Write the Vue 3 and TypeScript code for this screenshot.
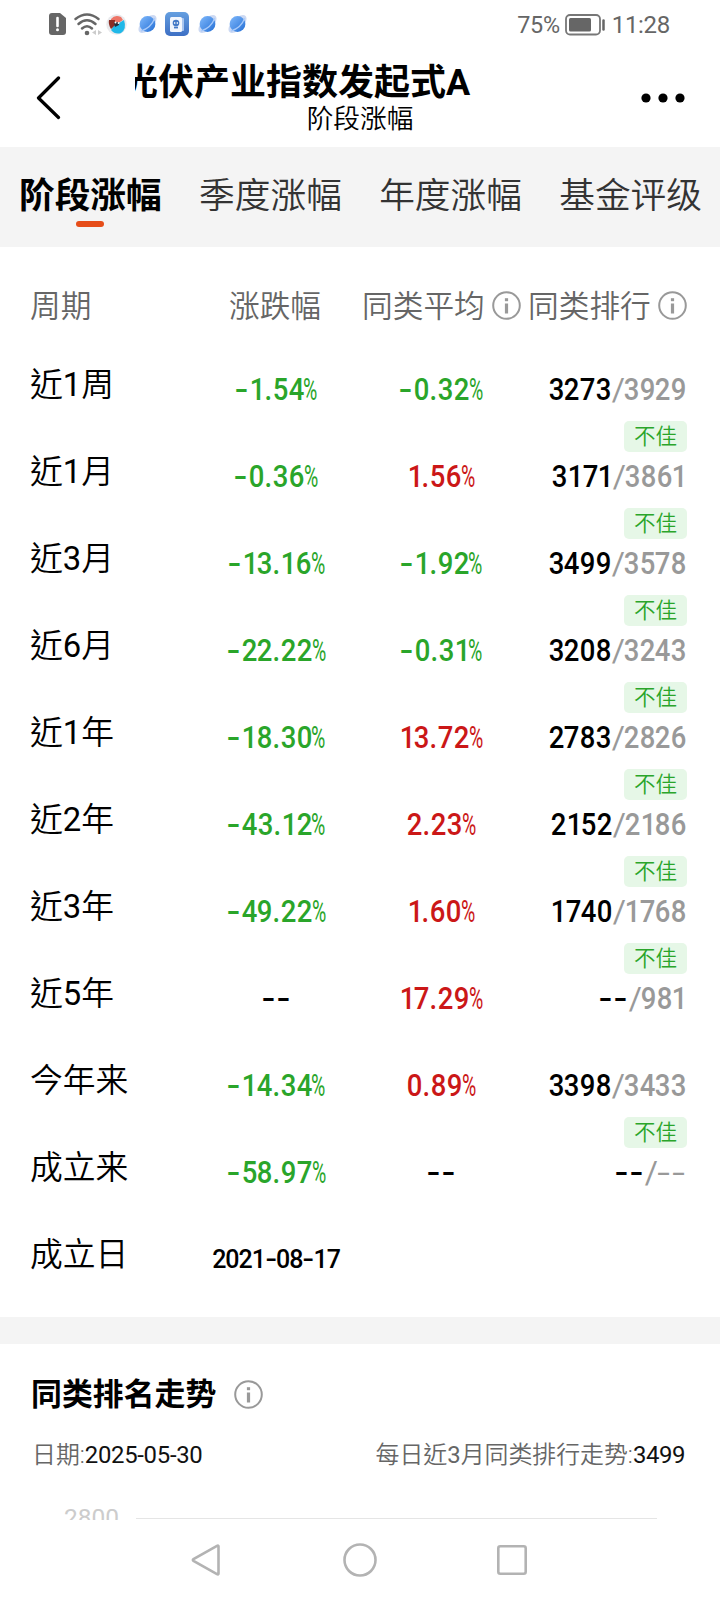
<script setup lang="ts">
interface Row {
  label: string
  change: string
  average: string
  rank: string
  total: string
  poor: boolean
}

const tabs: string[] = ['阶段涨幅', '季度涨幅', '年度涨幅', '基金评级']

const rows: Row[] = [
  { label: '近1周', change: '-1.54', average: '-0.32', rank: '3273', total: '3929', poor: true },
  { label: '近1月', change: '-0.36', average: '1.56', rank: '3171', total: '3861', poor: true },
  { label: '近3月', change: '-13.16', average: '-1.92', rank: '3499', total: '3578', poor: true },
  { label: '近6月', change: '-22.22', average: '-0.31', rank: '3208', total: '3243', poor: true },
  { label: '近1年', change: '-18.30', average: '13.72', rank: '2783', total: '2826', poor: true },
  { label: '近2年', change: '-43.12', average: '2.23', rank: '2152', total: '2186', poor: true },
  { label: '近3年', change: '-49.22', average: '1.60', rank: '1740', total: '1768', poor: true },
  { label: '近5年', change: '--', average: '17.29', rank: '--', total: '981', poor: false },
  { label: '今年来', change: '-14.34', average: '0.89', rank: '3398', total: '3433', poor: true },
  { label: '成立来', change: '-58.97', average: '--', rank: '--', total: '--', poor: false },
]

const tone = (v: string): string => (v === '--' ? 'none' : v.startsWith('-') ? 'down' : 'up')
const splitChars = (v: string): string[] => v.split('')
const charClass = (c: string): string =>
  c === '-' ? 'dash' : c === '.' ? 'dot' : c === '1' ? 'one' : 'digit'
const isDigit = (c: string): boolean => c >= '0' && c <= '9'
</script>

<template>
  <div class="screen">
    <div class="status">
      <div class="status-left">
        <svg class="sim" width="17" height="22" viewBox="0 0 17 22"><path d="M3 0h8l6 5v14q0 3-3 3H3q-3 0-3-3V3q0-3 3-3z" fill="#666" /><path d="M8.500 5v8" stroke="#fff" stroke-width="2.600" stroke-linecap="round" /><circle cx="8.500" cy="16.800" r="1.500" fill="#fff" /></svg>
        <svg class="wifi" width="28" height="23" viewBox="0 0 28 23"><g fill="none" stroke="#666" stroke-width="2.500" stroke-linecap="round"><path d="M1.500 6Q13 -3 24.500 6" /><path d="M4.500 11Q13 3.500 21.500 11" /><path d="M8 15.500Q13 11 18 15.500" /></g><circle cx="13" cy="20" r="2.300" fill="#666" /><path d="M22 17v5l-4-2.500zM24 17v5l4-2.500z" fill="#ccc" /></svg>
        <svg class="bird" width="21" height="21" viewBox="0 0 21 21"><circle cx="10.500" cy="10.500" r="10.200" fill="#e9eaed" /><path d="M5 5Q9 0 15 3l2 3-6 4-6-1z" fill="#ed7567" /><path d="M3 6l6 0 1 5-5 4Q2 10 3 6z" fill="#8c2d25" /><path d="M8 12l10-6q3 9-3 13-6 2-10-3z" fill="#20b8e8" /><path d="M8 8l5 0 0 3-4 2z" fill="#252f3c" /><circle cx="9.500" cy="8.500" r="1" fill="#fff" /><circle cx="12.500" cy="9" r=".9" fill="#fff" /></svg>
        <svg class="planet" width="20" height="20" viewBox="0 0 20 20"><defs><linearGradient id="globe" x2="1" y2="1"><stop stop-color="#80b9fc" /><stop offset="1" stop-color="#246fd5" /></linearGradient></defs><ellipse cx="10" cy="10" rx="12" ry="6" transform="rotate(-45 10 10)" fill="#ccd9f3" /><circle cx="10" cy="10" r="8.300" fill="url(#globe)" /><path d="M3 17.500Q14 14 17.500 4" fill="none" stroke="#a9cbfa" stroke-width="1.300" /></svg>
        <svg class="app" width="24" height="24" viewBox="0 0 24 24"><defs><linearGradient id="tile" x2="0" y2="1"><stop stop-color="#659fe0" /><stop offset="1" stop-color="#3d6fc4" /></linearGradient></defs><rect width="24" height="24" rx="5" fill="url(#tile)" /><rect x="10" y="6" width="9" height="13" rx="1" fill="#a9c6f0" /><rect x="5" y="5" width="12" height="15" rx="1.500" fill="#f2f6fd" /><circle cx="11" cy="11" r="3.300" fill="#4479c6" /><path d="M9 11h1.300m1.400 0H13" stroke="#fff" stroke-width="1.300" /><path d="M9 15.500h4" stroke="#4479c6" stroke-width="1.800" /></svg>
        <svg v-for="n in 2" :key="n" class="planet" width="20" height="20" viewBox="0 0 20 20"><ellipse cx="10" cy="10" rx="12" ry="6" transform="rotate(-45 10 10)" fill="#ccd9f3" /><circle cx="10" cy="10" r="8.300" fill="url(#globe)" /><path d="M3 17.500Q14 14 17.500 4" fill="none" stroke="#a9cbfa" stroke-width="1.300" /></svg>
      </div>
      <div class="status-right">
        <span class="percent">75%</span>
        <svg width="41" height="22" viewBox="0 0 41 22"><rect x="1" y="1" width="34" height="19.500" rx="4" fill="none" stroke="#777" stroke-width="1.800" /><rect x="4" y="4" width="22" height="13.500" rx="1.500" fill="#666" /><path d="M38.500 6.500v9" stroke="#666" stroke-width="2.500" stroke-linecap="round" /></svg>
        <span class="clock">11:28</span>
      </div>
    </div>

    <header class="header">
      <svg class="back" width="25" height="44" viewBox="0 0 25 44"><path d="M22.500 2L2.500 22l20 19.500" fill="none" stroke="#000" stroke-width="3.200" stroke-linecap="round" stroke-linejoin="round" /></svg>
      <div class="titles">
        <div class="marquee"><span>光伏产业指数发起式A</span></div>
        <div class="subtitle">阶段涨幅</div>
      </div>
      <svg class="more" width="44" height="10" viewBox="0 0 44 10"><circle cx="5" cy="5" r="4.600" /><circle cx="22" cy="5" r="4.600" /><circle cx="39" cy="5" r="4.600" /></svg>
    </header>

    <nav class="tabs">
      <div v-for="(tab, i) in tabs" :key="tab" class="tab" :class="{ active: i === 0 }">
        <span>{{ tab }}</span><i v-if="i === 0" />
      </div>
    </nav>

    <section class="table">
      <div class="grid head">
        <span>周期</span>
        <span class="mid">涨跌幅</span>
        <span class="info-head">同类平均<svg width="29" height="29" viewBox="0 0 29 29"><circle cx="14.500" cy="14.500" r="13.300" /><path d="M14.500 12.500v10" /><path d="M14.500 7.200v3" /></svg></span>
        <span class="info-head last">同类排行<svg width="29" height="29" viewBox="0 0 29 29"><circle cx="14.500" cy="14.500" r="13.300" /><path d="M14.500 12.500v10" /><path d="M14.500 7.200v3" /></svg></span>
      </div>
      <div v-for="row in rows" :key="row.label" class="grid row">
        <span class="label"><span v-for="(c, j) in splitChars(row.label)" :key="j" :class="{ count: isDigit(c) }">{{ c }}</span></span>
        <span v-for="(value, k) in [row.change, row.average]" :key="k" class="num mid" :class="tone(value)">
          <b v-for="(c, j) in splitChars(value)" :key="j" :class="charClass(c)">{{ c }}</b><em v-if="value !== '--'">%</em>
        </span>
        <div class="ranking">
          <div class="num">
            <b v-for="(c, j) in splitChars(row.rank)" :key="j" :class="charClass(c)">{{ c }}</b><span class="total"><b class="slash">/</b><b v-for="(c, j) in splitChars(row.total)" :key="j" :class="charClass(c)">{{ c }}</b></span>
          </div>
          <div v-if="row.poor" class="badge">不佳</div>
        </div>
      </div>
      <div class="grid row final">
        <span class="label">成立日</span>
        <span class="mid date">2021<u>-</u>08<u>-</u>17</span>
      </div>
    </section>

    <div class="divider" />

    <section class="trend">
      <h2>同类排名走势<svg width="29" height="29" viewBox="0 0 29 29"><circle cx="14.500" cy="14.500" r="13.300" /><path d="M14.500 12.500v10" /><path d="M14.500 7.200v3" /></svg></h2>
      <div class="legend">
        <span>日期:<strong class="day">2025-05-30</strong></span>
        <span>每日近<span class="count">3</span>月同类排行走势:<strong>3499</strong></span>
      </div>
      <div class="chart"><span>2800</span><i /></div>
    </section>

    <footer class="navbar">
      <svg width="30" height="34" viewBox="0 0 30 34"><path d="M27.500 3.500v27q0 1.500-1.500.7L2.500 18q-1.300-1 0-2L26 2.800q1.500-.8 1.500.7z" /></svg>
      <svg class="home" width="34" height="34" viewBox="0 0 34 34"><circle cx="17" cy="17" r="15.500" /></svg>
      <svg width="30" height="30" viewBox="0 0 30 30"><rect x="1.300" y="1.300" width="27.400" height="27.400" rx="2" /></svg>
    </footer>
  </div>
</template>

<style>
body { margin: 0; background: #fff; }
</style>

<style scoped>
.screen { width: 720px; height: 1600px; overflow: hidden; display: flex; flex-direction: column; background: #fff; color: #000; font-family: Roboto, "Noto Sans CJK SC", sans-serif; box-sizing: border-box; }
.status { height: 50px; flex: none; display: flex; justify-content: space-between; padding: 0 50px 0 49px; color: #666; }
.status-left, .status-right { display: flex; align-items: center; height: 48px; }
.status-left svg { overflow: visible; }
.wifi { margin-left: 8px; }
.bird { margin-left: 4px; }
.planet { margin-left: 11px; }
.app { margin-left: 8px; }
.status-left .app + .planet { margin-left: 9px; }
.status-left .planet { width: 19px; }
.status-left .planet:last-child { margin-left: 11px; }
.status-right { font-size: 23.400px; }
.status-right svg { margin: 1px 6px 0 5px; }
.percent, .clock { line-height: 50px; padding-top: 2px; }
.percent { letter-spacing: -.3px; }
.clock { font-size: 24px; letter-spacing: -.3px; }
.header { height: 97px; flex: none; display: flex; align-items: flex-start; }
.back { margin: 26px 0 0 36px; }
.titles { margin-left: 74px; width: 450px; }
.marquee { height: 54px; line-height: 66px; overflow: hidden; white-space: nowrap; font-size: 36px; font-weight: 700; }
.marquee span { margin-left: -13px; }
.subtitle { font-size: 26.700px; line-height: 30px; text-align: center; font-weight: 350; }
.more { margin: 43px 0 0 56px; }
.tabs { flex: none; height: 100px; background: #f4f4f4; display: flex; justify-content: space-between; padding: 0 18px 0 19px; box-sizing: border-box; font-size: 35.700px; color: #333; font-weight: 350; }
.tab { display: flex; flex-direction: column; align-items: center; white-space: nowrap; }
.tab span { line-height: 74px; padding-top: 12px; height: 62px; }
.tab i { width: 28px; height: 6px; border-radius: 3px; background: #e64d19; }
.active { color: #000; font-weight: 700; }
.table { height: 1070px; flex: none; }
.grid { display: grid; grid-template-columns: 162px 166px 164px 164px; padding: 0 34px 0 30px; }
.head { height: 118px; line-height: 114px; color: #666; font-size: 30.700px; font-weight: 350; font-family: "Noto Sans CJK SC", sans-serif; box-sizing: border-box; white-space: nowrap; }
.mid { text-align: center; }
.info-head { display: flex; align-items: center; height: 114px; gap: 7px; padding-left: 4px; }
.info-head.last { padding-left: 6px; }
.info-head svg, h2 svg { flex: none; fill: none; stroke: #999; stroke-width: 2; }
.info-head svg { margin-top: 2px; }
.info-head svg path, h2 svg path { stroke-width: 3.200; }
.row { height: 87px; }
.label { font-size: 32.800px; line-height: 41px; font-family: Roboto, "Noto Sans CJK TC", sans-serif; font-weight: 350; white-space: nowrap; }
.count { font-weight: 400; }
.num { display: flex; align-items: center; justify-content: center; height: 50px; font-size: 30.500px; font-weight: 550; line-height: 50px; }
.mid.num { padding-left: 2px; }
.num b { font-weight: inherit; display: block; width: 15.800px; text-align: center; transform: scaleX(.9); }
.num b.one { width: 14.600px; }
.num b.dot { width: 8.200px; }
.num b.dash { width: 15px; transform: scaleX(1.300); }
.num b.slash { width: 12px; transform: translateX(1px) scaleX(1.050); font-weight: 400; }
.num em { font-style: normal; font-weight: 400; display: block; width: 14.500px; transform: scaleX(.64); transform-origin: 0 50%; }
.down { color: #2aa52a; }
.up { color: #cb1717; }
.ranking { display: flex; flex-direction: column; align-items: flex-end; margin-right: -1px; }
.ranking .num { margin-right: 1px; }
.total { display: flex; color: #999; font-weight: 500; }
.total b.dash { transform: scaleX(1.500); font-weight: 400; }
.badge { margin-top: 6px; width: 63px; height: 31px; line-height: 32px; border-radius: 5px; background: #e6f7e7; color: #2aa52a; font-size: 21.500px; font-weight: 350; text-align: center; }
.final { height: 82px; }
.date { font-size: 25px; line-height: 49px; font-weight: 500; letter-spacing: -1px; padding-left: 2px; }
.date u { display: inline-block; width: 11px; text-decoration: none; transform: scaleX(1.350); }
.divider { height: 27px; flex: none; background: #f4f4f4; }
.trend { height: 176px; flex: none; overflow: hidden; }
h2 { margin: 0; padding: 29px 0 0 31px; font-size: 30.900px; line-height: 48px; height: 44px; font-weight: 700; display: flex; align-items: center; gap: 18px; }
h2 svg { margin-top: -2px; }
.legend { display: flex; justify-content: space-between; padding: 19px 35px 0 32px; font-size: 23.900px; line-height: 38px; color: #666; font-weight: 350; font-family: Roboto, "Noto Sans CJK TC", sans-serif; }
.legend strong { color: #111; font-weight: 400; letter-spacing: -.4px; }
.legend .day { letter-spacing: -.3px; }
.chart { display: flex; align-items: center; padding: 31px 63px 0 64px; gap: 17px; font-size: 24.500px; line-height: 26px; color: #ccc; }
.chart i { height: 1px; flex: 1; background: #e5e5e5; }
.navbar { flex: none; height: 80px; display: flex; align-items: center; padding: 0 193px 0 191px; justify-content: space-between; }
.navbar svg { fill: none; stroke: #b3b3b3; stroke-width: 2.600; }
.home { margin-left: 2px; }
</style>
